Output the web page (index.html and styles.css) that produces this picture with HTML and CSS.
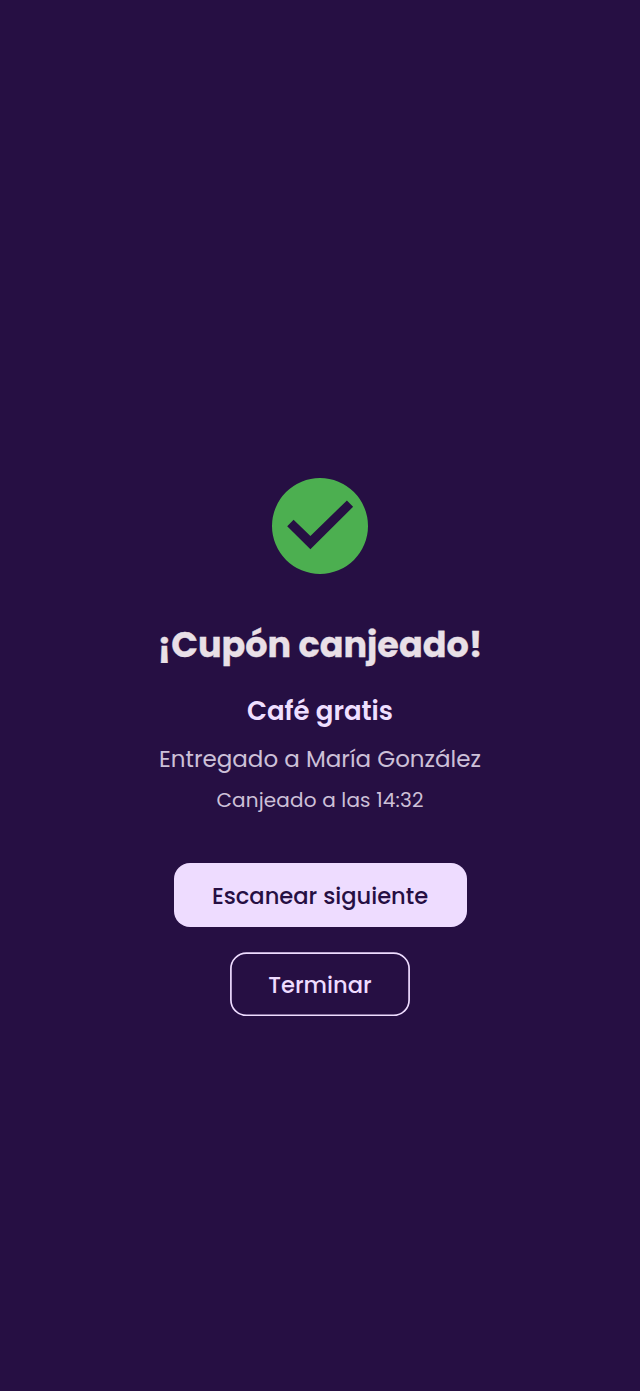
FILE: index.html
```html
<!DOCTYPE html>
<html lang="es">
<head>
<meta charset="utf-8">
<title>Cupón canjeado</title>
<link rel="stylesheet" href="styles.css">
</head>
<body>
<main class="screen">
  <svg class="status-icon" viewBox="0 0 96 96" aria-hidden="true"><path fill-rule="evenodd" d="M48 0a48 48 0 1 1 0 96a48 48 0 1 1 0-96zM38.4 71.3L15.2 48.2L21.6 41.7L38.4 58L74.9 22.4L81.1 28.8z"/></svg>
  <h1 class="title">¡Cupón canjeado!</h1>
  <h2 class="coupon">Café gratis</h2>
  <p class="customer">Entregado a María González</p>
  <p class="time">Canjeado a las 14:32</p>
  <button class="button button-primary">Escanear siguiente</button>
  <button class="button button-outline"><svg class="outline" viewBox="0 0 180 64" aria-hidden="true"><rect x=".9" y="1.2" width="178.2" height="62.2" rx="15.5"/></svg>Terminar</button>
</main>
</body>
</html>
```
FILE: styles.css
```css
* { box-sizing: border-box; }
body { margin: 0; background: #260f43; font-family: Poppins, Inter, sans-serif; }
.screen { min-height: 1391px; padding-top: 478px; display: flex; flex-direction: column; align-items: center; }
.status-icon { width: 96px; height: 96px; fill: #4caf50; flex: none; }
h1, h2, p { margin: 0; white-space: nowrap; }
.title { margin-top: 45px; font-size: 35px; line-height: 51px; font-weight: 700; color: #e9e0e7; -webkit-text-stroke: 0.3px #e9e0e7; }
.coupon { margin-top: 23px; font-size: 26px; line-height: 36px; font-weight: 600; color: #efdfff; }
.customer { margin-top: 14px; font-size: 23px; line-height: 32px; color: #cdc0d8; }
.time { margin-top: 11px; font-size: 20px; line-height: 28px; letter-spacing: 0.16px; color: #cdc0d8; }
.button { height: 64px; border: 0; border-radius: 16px; padding: 1px 0 0; font-family: inherit; font-size: 22.6px; font-weight: 500; white-space: nowrap; }
.button-primary { width: 293px; margin-top: 49px; background: #eedcff; color: #260f43; }
.button-outline { position: relative; width: 180px; margin-top: 25px; background: transparent; color: #eedcff; }
.outline { position: absolute; inset: 0; width: 180px; height: 64px; fill: none; stroke: #eedcff; stroke-width: 1.7; }
```
